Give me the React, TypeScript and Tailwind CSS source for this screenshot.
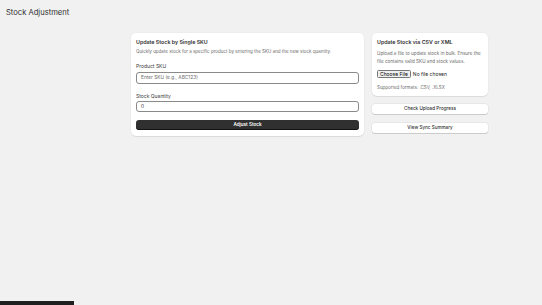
import React from "react";

export default function App() {
  const font = { fontFamily: "Inter, 'Noto Sans', sans-serif" };
  return (
    <div className="min-h-[305px] w-full bg-[#f1f1f1] text-[#303030]" style={font}>
      <div className="px-[6px] pt-[7px] h-[33px]">
        <h1 className="text-[7.6px] leading-[12px] font-normal text-[#303030]">Stock Adjustment</h1>
      </div>
      <div className="flex items-start gap-[8px] pl-[131px]">
        {/* Left card */}
        <div className="w-[233px] rounded-[5px] bg-white px-[5px] pt-[5px] pb-[5.5px] shadow-[0_1px_1px_rgba(0,0,0,0.08),0_0_0_0.5px_rgba(0,0,0,0.03)]">
          <h2 className="text-[5.3px] leading-[8px] font-semibold text-[#303030]">Update Stock by Single SKU</h2>
          <p className="mt-[3px] text-[4.5px] leading-[6px] text-[#6b6b6b]">
            Quickly update stock for a specific product by entering the SKU and the new stock quantity.
          </p>
          <label className="mt-[7.5px] block text-[5px] leading-[6px] text-[#3a3a3a]">Product SKU</label>
          <div className="mt-[3px] flex h-[12px] items-center rounded-[3px] border-[0.5px] border-[#8a8a8a] px-[4px] text-[4.8px] text-[#6b6b6b]">
            Enter SKU (e.g., ABC123)
          </div>
          <label className="mt-[9px] block text-[5px] leading-[6px] text-[#3a3a3a]">Stock Quantity</label>
          <div className="mt-[2.7px] flex h-[11px] items-center rounded-[3px] border-[0.5px] border-[#8a8a8a] px-[4px] text-[4.8px] text-[#303030]">
            0
          </div>
          <button className="mt-[8px] flex h-[10.3px] w-full items-center justify-center rounded-[3px] bg-[#303030] text-[4.6px] font-semibold text-white shadow-[inset_0_-1px_0_rgba(0,0,0,0.6)]">
            Adjust Stock
          </button>
        </div>
        {/* Right column */}
        <div className="flex w-[116px] flex-col">
          <div className="rounded-[5px] bg-white px-[5px] pt-[5px] pb-[5.4px] shadow-[0_1px_1px_rgba(0,0,0,0.08),0_0_0_0.5px_rgba(0,0,0,0.03)]">
            <h2 className="text-[5.3px] leading-[8px] font-semibold text-[#303030]">Update Stock via CSV or XML</h2>
            <p className="mt-[4px] text-[4.6px] leading-[7.6px] text-[#6b6b6b]">
              Upload a file to update stock in bulk. Ensure the file contains valid SKU and stock values.
            </p>
            <div className="mt-[4.6px] flex items-center gap-[2px] text-[5px] leading-[7px]">
              <span className="rounded-[1.5px] border-[0.5px] border-[#767676] bg-[#efefef] px-[2px] leading-[6.5px] text-black">
                Choose File
              </span>
              <span className="text-[#1a1a1a]">No file chosen</span>
            </div>
            <p className="mt-[6.6px] text-[4.5px] leading-[6px] text-[#6b6b6b]">Supported formats: .CSV, .XLSX</p>
          </div>
          <button className="mt-[8px] flex h-[10px] w-full items-center justify-center rounded-[3px] bg-white text-[4.6px] font-medium text-[#303030] shadow-[0_1px_0_rgba(0,0,0,0.12),0_0_0_0.5px_rgba(0,0,0,0.08)]">
            Check Upload Progress
          </button>
          <button className="mt-[9px] flex h-[10px] w-full items-center justify-center rounded-[3px] bg-white text-[4.6px] font-medium text-[#303030] shadow-[0_1px_0_rgba(0,0,0,0.12),0_0_0_0.5px_rgba(0,0,0,0.08)]">
            View Sync Summary
          </button>
        </div>
      </div>
      <div className="fixed bottom-0 left-0 h-[4px] w-[74px] bg-[#1f1f1f]" />
    </div>
  );
}
